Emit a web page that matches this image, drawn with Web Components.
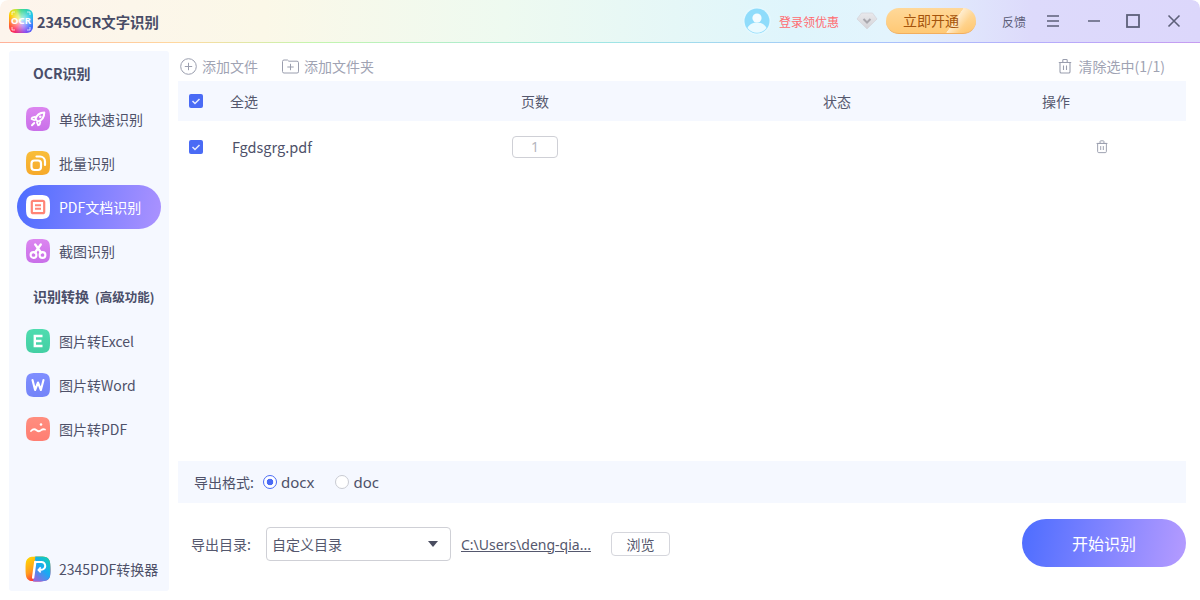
<!DOCTYPE html>
<html lang="zh">
<head>
<meta charset="utf-8">
<title>2345OCR文字识别</title>
<style>
    html, body { margin: 0; height: 100%; background: #fff; }
    body { font-family: "Noto Sans CJK SC", "Noto Sans", sans-serif; color: #4e5169; overflow: hidden; }
</style>
</head>
<body>
<ocr-app></ocr-app>

<script>
const ICONS = {
    rocket: `<path d="M18.300 5.500c-4.200.2-7.700 2.600-8.900 6.700l2.400 2.400c4.100-1.200 6.500-4.800 6.500-9.100z" fill="none" stroke="#fff" stroke-width="2" stroke-linejoin="round"/><circle cx="14.300" cy="9.800" r="1.300" fill="#fff"/><path d="M9.800 9.600L6.200 10.700l-.6 1.300 3.400 1.500M14.500 14.200l-1 3.500-1.300.6-1.500-3.400" fill="none" stroke="#fff" stroke-width="1.800" stroke-linejoin="round"/><path d="M8.200 16l-2.200 2.200" stroke="#fff" stroke-width="2" stroke-linecap="round"/>`,
    batch: `<rect x="5.500" y="9.500" width="9.500" height="9.500" rx="3" fill="none" stroke="#fff" stroke-width="2.200"/><path d="M10.500 5.500h3.500A5 5 0 0 1 19 10.500V14" fill="none" stroke="#fff" stroke-width="2.200" stroke-linecap="round"/>`,
    pdf: `<rect x="5.800" y="5.800" width="12.400" height="12.400" rx="1.500" fill="none" stroke="#ff8577" stroke-width="2.200"/><path d="M9 10.200h6M9 13.800h6" stroke="#ff8577" stroke-width="2"/>`,
    cut: `<circle cx="7.500" cy="16" r="2.900" fill="none" stroke="#fff" stroke-width="2.100"/><circle cx="16.500" cy="16" r="2.900" fill="none" stroke="#fff" stroke-width="2.100"/><path d="M9 13.500L14.800 5.500M15 13.500L9.200 5.500" stroke="#fff" stroke-width="2.300" stroke-linecap="round"/>`,
    excel: `<path d="M16.500 7H8.800v10h7.700M8.800 12h6.700" fill="none" stroke="#fff" stroke-width="2.400"/>`,
    word: `<path d="M6.500 7l2.600 10 2.900-7.500 2.900 7.500 2.600-10" fill="none" stroke="#fff" stroke-width="2.100" stroke-linejoin="round" stroke-linecap="round"/>`,
    image: `<circle cx="15" cy="7.500" r="1.300" fill="#fff"/><path d="M5 14c2-2.200 3.800-2.200 5.500-.8 1.800 1.500 3.300 1.300 4.700 0 1-.9 2.200-1.200 3.800-.7" fill="none" stroke="#fff" stroke-width="1.800" stroke-linecap="round"/>`,
    converter: `<path d="M7.500 20L9.500 5.500" fill="none" stroke="#fff" stroke-width="2.200" stroke-linecap="round"/><path d="M9.500 5.500H15a3.600 3.600 0 0 1 1.500 6.900c-1 .4-2.200.5-3.500.5" fill="none" stroke="#fff" stroke-width="1.800" stroke-linecap="round"/><path d="M14.500 10.500L12.300 12.900l2.200 2.200" fill="none" stroke="#fff" stroke-width="1.500"/>`
};

const TRASH = `<path d="M3 4.500h10v9.200a1.300 1.300 0 0 1-1.300 1.300H4.300A1.300 1.300 0 0 1 3 13.700zM1.800 4.500h12.400M5.800 4.300V2.200a.8.8 0 0 1 .8-.7h2.800a.8.8 0 0 1 .8.7v2.100M6.500 7.500v4.500M9.500 7.500v4.500" fill="none" stroke="#9a9eae" stroke-width="1.100"/>`;

function shadowFor(element, html) {
    element.attachShadow({ mode: "open" });
    element.shadowRoot.innerHTML = html;
}

class TitleBar extends HTMLElement {
    constructor() {
        super();
        shadowFor(this, `
            <style>
                :host {
                    display: flex;
                    align-items: center;
                    box-sizing: border-box;
                    height: 43px;
                    padding: 0 19px 1px 9px;
                    border-radius: 8px 8px 0 0;
                    background:
                        linear-gradient(90deg, #ffb199, #ffd9a0 15%, #c4f5ae 26%, #9fe6e4 50%, #a6c8fb 70%, #b7abfb 88%, #c69cf0) bottom / 100% 1px no-repeat,
                        linear-gradient(90deg, #fdf4ec 0, #fbf8e8 22%, #eefaf0 42%, #dff5fc 66%, #e3f4fd 74%, #dddafb 86%, #dcd7fb 100%);
                }
                .logo {
                    position: relative;
                    display: flex;
                    align-items: center;
                    justify-content: center;
                    width: 24px;
                    height: 24px;
                    border-radius: 6px;
                    overflow: hidden;
                    font: 700 9.500px/1 "Noto Sans", sans-serif;
                    color: #fff;
                    background:
                        radial-gradient(ellipse at center, rgba(255,255,255,.75) 0, rgba(255,255,255,.35) 40%, transparent 70%),
                        conic-gradient(from 0deg at 50% 50%, #3fd98a 0, #21c8e8 60deg, #3b6cff 120deg, #8f4cf0 160deg, #ff2b5e 215deg, #ff6a2a 255deg, #ffd400 300deg, #c9e63a 335deg, #3fd98a 360deg);
                }
                .logo svg { position: absolute; inset: 0; }
                .name {
                    margin-left: 4px;
                    font-size: 14.400px;
                    font-weight: 700;
                    color: #484c66;
                    white-space: nowrap;
                }
                .right { display: flex; align-items: center; margin-left: auto; }
                .avatar { width: 28px; height: 28px; display: block; }
                .login { margin-left: 8px; font-size: 12px; color: #ff6b70; white-space: nowrap; }
                .gem { margin-left: 17px; width: 22px; height: 20px; display: block; }
                .vip {
                    margin-left: 8px;
                    box-sizing: border-box;
                    width: 90px;
                    height: 26px;
                    border-radius: 13px;
                    border: 0;
                    border-bottom: 1px solid #f2ae5e;
                    padding: 0;
                    font: 14px/25px "Noto Sans CJK SC", sans-serif;
                    color: #a5540c;
                    text-align: center;
                    background:
                        linear-gradient(125deg, transparent 0, transparent 72%, rgba(255,240,215,.85) 72.500%, rgba(255,225,175,.2) 84%, transparent 90%),
                        linear-gradient(180deg, #ffd899, #ffc975);
                }
                .feedback { margin-left: 26px; font-size: 12px; color: #5d607a; white-space: nowrap; }
                svg.ctl { display: block; width: 14px; height: 14px; stroke: #5d6079; stroke-width: 1.600; fill: none; }
                .menu { margin-left: 20px; }
                .min { margin-left: 27px; }
                .max { margin-left: 25px; }
                .close { margin-left: 27px; }
            </style>
            <span class="logo">
                <svg width="24" height="24" viewBox="0 0 24 24"><path d="M3 6V3h3M18 3h3v3M21 18v3h-3M6 21H3v-3" fill="none" stroke="#fff" stroke-width="1" opacity=".75"/></svg>
                OCR
            </span>
            <span class="name">2345OCR文字识别</span>
            <div class="right">
                <svg class="avatar" viewBox="0 0 28 28">
                    <circle cx="14" cy="14" r="14" fill="#e4f8fe"/>
                    <circle cx="14" cy="14" r="12.500" fill="#8fdcfb"/>
                    <circle cx="14" cy="11" r="4.600" fill="#fff" opacity=".9"/>
                    <path d="M4.500 21c2-4 5.500-5.500 9.500-5.500s7.500 1.500 9.500 5.500a12 12 0 0 1-19 0z" fill="#eafaff"/>
                </svg>
                <span class="login">登录领优惠</span>
                <svg class="gem" viewBox="0 0 22 20">
                    <defs><linearGradient id="gm" x1="0" y1="0" x2="0" y2="1"><stop offset="0" stop-color="#e9e9ec"/><stop offset="1" stop-color="#d3d3d8"/></linearGradient></defs>
                    <path d="M5.500 2h11L21 8l-10 10L1 8z" fill="url(#gm)" stroke="#d6d6dc" stroke-width=".8" stroke-linejoin="round"/>
                    <path d="M7.500 8l3.500 3.500L14.500 8" fill="none" stroke="#a9a8ae" stroke-width="2"/>
                </svg>
                <button class="vip">立即开通</button>
                <span class="feedback">反馈</span>
                <svg class="ctl menu" viewBox="0 0 14 14"><path d="M1 2h12M1 7h12M1 12h12"/></svg>
                <svg class="ctl min" viewBox="0 0 14 14"><path d="M1 7h12"/></svg>
                <svg class="ctl max" viewBox="0 0 14 14"><rect x="1" y="1" width="12" height="12" stroke-width="1.800"/></svg>
                <svg class="ctl close" viewBox="0 0 14 14"><path d="M1.500 1.500l11 11M12.500 1.500l-11 11"/></svg>
            </div>
        `);
    }
}

class NavItem extends HTMLElement {
    constructor() {
        super();
        const icon = this.getAttribute("icon");
        const background = this.getAttribute("tone");
        shadowFor(this, `
            <style>
                :host {
                    display: flex;
                    align-items: center;
                    height: 44px;
                    margin: 0 8px;
                    padding-left: 9px;
                    border-radius: 22px;
                    font-size: 14px;
                    color: #4e5169;
                    white-space: nowrap;
                }
                :host([active]) {
                    color: #fff;
                    background: linear-gradient(100deg, #4d6dff, #ab92ff);
                }
                svg { display: block; width: 24px; height: 24px; margin-right: 9px; flex: none; }
            </style>
            <svg viewBox="0 0 24 24">
                <defs>
                    <linearGradient id="g" x1="0" y1="0" x2="0" y2="1">
                        ${background.split(",").map((c, i) => `<stop offset="${i}" stop-color="${c}"/>`).join("")}
                    </linearGradient>
                </defs>
                <path d="M12 0c7 0 8.500.5 10 2s2 3 2 10-.5 8.500-2 10-3 2-10 2-8.500-.5-10-2-2-3-2-10 .5-8.500 2-10 3-2 10-2z" fill="url(#g)"/>
                ${ICONS[icon]}
            </svg>
            <slot></slot>
        `);
    }
}

class SideNav extends HTMLElement {
    constructor() {
        super();
        shadowFor(this, `
            <style>
                :host {
                    display: flex;
                    flex-direction: column;
                    box-sizing: border-box;
                    width: 160px;
                    flex: none;
                    background: #f5f8ff;
                    border-radius: 3px;
                }
                .head {
                    height: 46px;
                    display: flex;
                    align-items: center;
                    padding-left: 24px;
                    font-size: 14px;
                    font-weight: 700;
                    color: #4a4e69;
                    white-space: nowrap;
                }
                .head small { font-size: 12.500px; margin-left: 6px; }
                .first { padding-bottom: 2px; box-sizing: border-box; }
                .foot { margin-top: auto; }
            </style>
            <div class="head first">OCR识别</div>
            <nav-item icon="rocket" tone="#dc86f0,#c96fe9">单张快速识别</nav-item>
            <nav-item icon="batch" tone="#f9be3a,#f6a92a">批量识别</nav-item>
            <nav-item icon="pdf" tone="#ffffff,#ffffff" active>PDF文档识别</nav-item>
            <nav-item icon="cut" tone="#dc86f0,#c96fe9">截图识别</nav-item>
            <div class="head">识别转换<small>(高级功能)</small></div>
            <nav-item icon="excel" tone="#4fdcaf,#43cfa3">图片转Excel</nav-item>
            <nav-item icon="word" tone="#7f8eff,#7384f8">图片转Word</nav-item>
            <nav-item icon="image" tone="#ff8e7f,#ff7e72">图片转PDF</nav-item>
            <pdf-link class="foot"></pdf-link>
        `);
    }
}

class PdfLink extends HTMLElement {
    constructor() {
        super();
        shadowFor(this, `
            <style>
                :host {
                    display: flex;
                    align-items: center;
                    height: 44px;
                    padding-left: 16px;
                    font-size: 14px;
                    color: #4e5169;
                    white-space: nowrap;
                }
                svg { display: block; width: 26px; height: 26px; margin-right: 8px; flex: none; }
            </style>
            <svg viewBox="0 0 24 24">
                <defs>
                    <linearGradient id="a" x1="0" y1="0" x2=".7" y2="1">
                        <stop offset="0" stop-color="#ffe000"/><stop offset=".5" stop-color="#ff9a1f"/><stop offset=".85" stop-color="#ff1f3d"/><stop offset="1" stop-color="#d02cb0"/>
                    </linearGradient>
                    <linearGradient id="b" x1="1" y1="0" x2=".3" y2="1">
                        <stop offset="0" stop-color="#10d6a8"/><stop offset=".55" stop-color="#1aa8f5"/><stop offset="1" stop-color="#8c6ce0"/>
                    </linearGradient>
                </defs>
                <path d="M12 .5c7 0 8.200.5 9.500 2s2 3 2 9.500-.5 8.200-2 9.500-3 2-9.500 2-8.200-.5-9.500-2-2-3-2-9.500.5-8.200 2-9.500S5 .5 12 .5z" fill="url(#a)"/>
                <path d="M9.500.5H12c7 0 8.200.5 9.500 2s2 3 2 9.500-.5 8.200-2 9.500-3 2-9.500 2H7.500z" fill="url(#b)"/>
                ${ICONS.converter}
            </svg>
            <span>2345PDF转换器</span>
        `);
    }
}

class CheckBox extends HTMLElement {
    constructor() {
        super();
        shadowFor(this, `
            <style>
                :host { display: block; width: 14px; height: 14px; }
                svg { display: block; }
            </style>
            <svg width="14" height="14" viewBox="0 0 14 14">
                <rect width="14" height="14" rx="2" fill="#4a6bf5"/>
                <path d="M3.500 7l2.500 2.500 4.500-4.500" fill="none" stroke="#e6ebff" stroke-width="1.500"/>
            </svg>
        `);
    }
}

class ToolBar extends HTMLElement {
    constructor() {
        super();
        shadowFor(this, `
            <style>
                :host {
                    display: flex;
                    align-items: center;
                    height: 30px;
                    padding: 0 21px 0 2px;
                    font-size: 14px;
                    color: #a0a3b3;
                    white-space: nowrap;
                }
                .tool { display: flex; align-items: center; gap: 5px; }
                .folder { margin-left: 24px; }
                .clear { margin-left: auto; gap: 6px; }
                svg { display: block; }
            </style>
            <span class="tool">
                <svg width="17" height="17" viewBox="0 0 17 17"><circle cx="8.500" cy="8.500" r="7.800" fill="none" stroke="#9a9eae"/><path d="M8.500 4.800v7.400M4.800 8.500h7.400" stroke="#9a9eae"/></svg>
                添加文件
            </span>
            <span class="tool folder">
                <svg width="17" height="17" viewBox="0 0 17 17"><path d="M.5 3.500a1.500 1.500 0 0 1 1.500-1.500h3.500l1.300 1.200H15a1.500 1.500 0 0 1 1.500 1.500v8.500A1.500 1.500 0 0 1 15 15H2a1.500 1.500 0 0 1-1.500-1.500z" fill="none" stroke="#9a9eae"/><path d="M8.500 5.800v6.400M5.300 9h6.400" stroke="#9a9eae"/></svg>
                添加文件夹
            </span>
            <span class="tool clear">
                <svg width="16" height="18" viewBox="0 0 16 16">${TRASH}</svg>
                清除选中(1/1)
            </span>
        `);
    }
}

class FileTable extends HTMLElement {
    constructor() {
        super();
        shadowFor(this, `
            <style>
                :host { display: block; flex: 1; font-size: 14px; color: #55586e; }
                .row {
                    display: grid;
                    grid-template-columns: 41px 250px 110px 192px 110px 109px 110px;
                    align-items: center;
                    padding-left: 11px;
                }
                .head { height: 40px; background: #f5f8ff; }
                .head span { line-height: 38px; }
                .body { height: 52px; }
                .file { font-size: 14.500px; padding: 0 0 2px 2px; color: #4e5169; }
                .center { text-align: center; }
                .pages {
                    box-sizing: border-box;
                    width: 46px;
                    height: 22px;
                    margin: 0 auto;
                    border: 1px solid #cfd0d6;
                    border-radius: 4px;
                    font: 14px/20px "Noto Sans", sans-serif;
                    color: #b4b6c0;
                    text-align: center;
                }
                .trash { display: block; margin: -2px 0 0 94px; }
            </style>
            <div class="row head">
                <check-box></check-box>
                <span>全选</span>
                <span class="center">页数</span>
                <span></span>
                <span class="center">状态</span>
                <span></span>
                <span class="center">操作</span>
            </div>
            <div class="row body">
                <check-box></check-box>
                <span class="file">Fgdsgrg.pdf</span>
                <div class="pages">1</div>
                <span></span>
                <span></span>
                <span></span>
                <svg class="trash" width="14" height="15" viewBox="0 0 16 16">${TRASH}</svg>
            </div>
        `);
    }
}

class FormatBar extends HTMLElement {
    constructor() {
        super();
        shadowFor(this, `
            <style>
                :host {
                    display: flex;
                    align-items: center;
                    box-sizing: border-box;
                    height: 42px;
                    padding: 0 0 0 16px;
                    background: #f5f8ff;
                    font-size: 14px;
                    color: #4e5169;
                }
                .radio {
                    box-sizing: border-box;
                    width: 14px;
                    height: 14px;
                    border-radius: 50%;
                    border: 1px solid #c9cbd2;
                    background: #fff;
                    margin-right: 4px;
                }
                .label { width: 69px; }
                .on { border-color: #4a6bf5; background: radial-gradient(circle, #4a6bf5 0 3px, #fff 3.600px); }
                .val { font: 15px "Noto Sans", sans-serif; }
                .off { margin-left: 21px; }
            </style>
            <span class="label">导出格式:</span>
            <span class="radio on"></span><span class="val">docx</span>
            <span class="radio off"></span><span class="val">doc</span>
        `);
    }
}

class ExportRow extends HTMLElement {
    constructor() {
        super();
        shadowFor(this, `
            <style>
                :host {
                    display: flex;
                    align-items: center;
                    box-sizing: border-box;
                    height: 88px;
                    padding: 0 0 6px 13px;
                    font-size: 14px;
                    color: #55586e;
                    white-space: nowrap;
                }
                .label { width: 75px; flex: none; }
                .select {
                    display: flex;
                    align-items: center;
                    justify-content: space-between;
                    box-sizing: border-box;
                    width: 185px;
                    height: 34px;
                    padding: 0 12px 0 5px;
                    border: 1px solid #cfd0d6;
                    border-radius: 4px;
                }
                .caret { width: 0; height: 0; border: 5px solid transparent; border-top: 6px solid #4a4d60; border-bottom: 0; }
                .path { margin-left: 10px; width: 130px; text-decoration: underline; font-family: "Noto Sans", sans-serif; font-size: 14px; }
                .browse {
                    box-sizing: border-box;
                    width: 59px;
                    height: 24px;
                    margin-left: 20px;
                    border: 1px solid #d5d6dc;
                    border-radius: 4px;
                    background: #fff;
                    padding: 0;
                    font: 14px "Noto Sans CJK SC", sans-serif;
                    color: #55586e;
                }
                .start {
                    width: 164px;
                    height: 48px;
                    margin: -2px 0 0 auto;
                    border: 0;
                    border-radius: 24px;
                    padding: 0;
                    font: 16px "Noto Sans CJK SC", sans-serif;
                    color: #fff;
                    background: linear-gradient(100deg, #4d6dff, #b59bff);
                }
            </style>
            <span class="label">导出目录:</span>
            <div class="select"><span>自定义目录</span><span class="caret"></span></div>
            <span class="path">C:\\Users\\deng-qia...</span>
            <button class="browse">浏览</button>
            <button class="start">开始识别</button>
        `);
    }
}

class OcrApp extends HTMLElement {
    constructor() {
        super();
        shadowFor(this, `
            <style>
                :host {
                    display: flex;
                    flex-direction: column;
                    width: 1200px;
                    height: 600px;
                    overflow: hidden;
                    border-radius: 8px;
                }
                .content { display: flex; flex: 1; min-height: 0; padding: 8px 14px 9px 9px; gap: 9px; }
                .main { display: flex; flex-direction: column; flex: 1; min-width: 0; }
            </style>
            <title-bar></title-bar>
            <div class="content">
                <side-nav></side-nav>
                <div class="main">
                    <tool-bar></tool-bar>
                    <file-table></file-table>
                    <format-bar></format-bar>
                    <export-row></export-row>
                </div>
            </div>
        `);
    }
}

customElements.define("title-bar", TitleBar);
customElements.define("nav-item", NavItem);
customElements.define("pdf-link", PdfLink);
customElements.define("side-nav", SideNav);
customElements.define("check-box", CheckBox);
customElements.define("tool-bar", ToolBar);
customElements.define("file-table", FileTable);
customElements.define("format-bar", FormatBar);
customElements.define("export-row", ExportRow);
customElements.define("ocr-app", OcrApp);
</script>
</body>
</html>
